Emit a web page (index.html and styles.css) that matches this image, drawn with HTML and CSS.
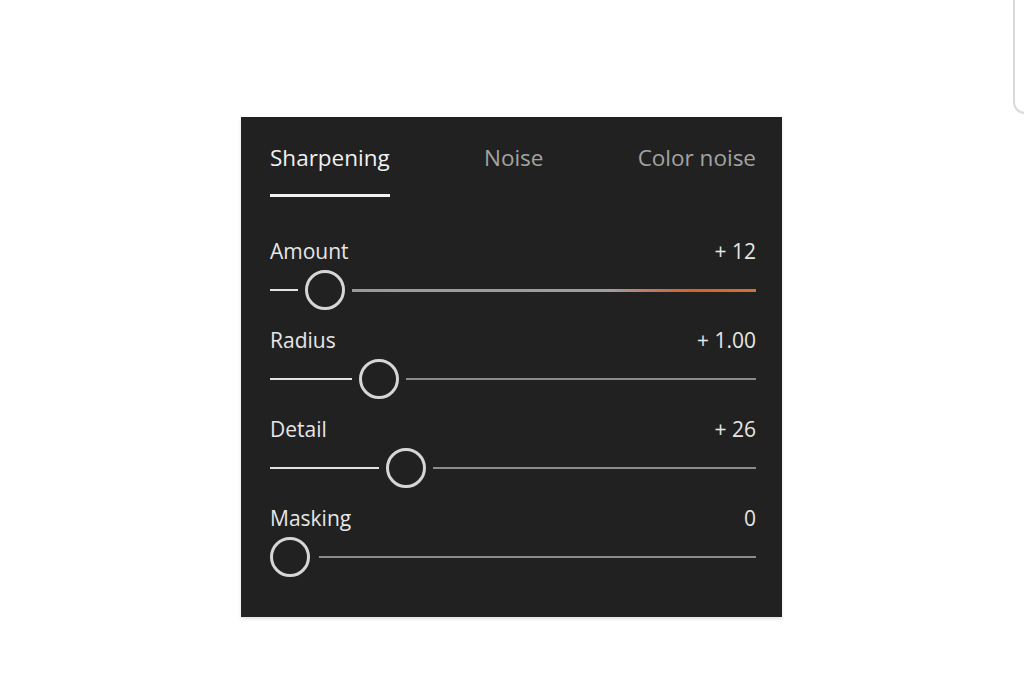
FILE: index.html
```html
<!DOCTYPE html>
<html>
<head>
<meta charset="utf-8">
<link rel="stylesheet" href="styles.css">
</head>
<body>
<div class="scroll-edge"></div>
<div class="panel">
  <div class="tabs">
    <div class="tab active">Sharpening</div>
    <div class="tab">Noise</div>
    <div class="tab">Color noise</div>
  </div>
  <div class="rows">
    <div class="row">
      <div class="row-head"><span class="label">Amount</span><span class="value">+ 12</span></div>
      <div class="slider">
        <div class="fill" style="width:28px"></div>
        <div class="thumb"></div>
        <div class="rest rest-warm"></div>
      </div>
    </div>
    <div class="row">
      <div class="row-head"><span class="label">Radius</span><span class="value">+ 1.00</span></div>
      <div class="slider">
        <div class="fill" style="width:82px"></div>
        <div class="thumb"></div>
        <div class="rest"></div>
      </div>
    </div>
    <div class="row">
      <div class="row-head"><span class="label">Detail</span><span class="value">+ 26</span></div>
      <div class="slider">
        <div class="fill" style="width:109px"></div>
        <div class="thumb"></div>
        <div class="rest"></div>
      </div>
    </div>
    <div class="row">
      <div class="row-head"><span class="label">Masking</span><span class="value">0</span></div>
      <div class="slider">
        <div class="thumb thumb-start"></div>
        <div class="rest"></div>
      </div>
    </div>
  </div>
</div>
</body>
</html>
```
FILE: styles.css
```css
html, body {
  margin: 0;
  padding: 0;
  background: #ffffff;
  width: 1024px;
  height: 687px;
  overflow: hidden;
  font-family: "Open Sans", "Liberation Sans", sans-serif;
}

.scroll-edge {
  position: absolute;
  left: 1013px;
  top: -20px;
  width: 40px;
  height: 132px;
  border-left: 2px solid #dadada;
  border-bottom: 2px solid #dadada;
  border-bottom-left-radius: 12px;
}

.panel {
  margin: 117px 0 0 241px;
  width: 541px;
  height: 500px;
  box-sizing: border-box;
  background: #212121;
  padding: 0 26px 0 29px;
  box-shadow: 0 2px 3px rgba(0, 0, 0, 0.12);
}

.tabs {
  display: flex;
  justify-content: space-between;
  padding-top: 26px;
  height: 80px;
  box-sizing: border-box;
}

.tab {
  font-size: 22.5px;
  line-height: 30px;
  color: #a3a3a3;
  height: 54px;
  box-sizing: border-box;
}

.tab.active {
  color: #f0f0f0;
  border-bottom: 3px solid #f2f2f2;
}

.rows {
  display: flex;
  flex-direction: column;
  padding-top: 40px;
  gap: 9px;
}

.row {
  display: flex;
  flex-direction: column;
  height: 80px;
}

.row-head {
  display: flex;
  justify-content: space-between;
  font-size: 21px;
  line-height: 28px;
  color: #e6e6e6;
}

.value {
  color: #e6e6e6;
}

.slider {
  display: flex;
  align-items: center;
  height: 40px;
  margin-top: 5px;
}

.fill {
  height: 2px;
  background: #e2e2e2;
  margin-right: 7px;
  flex: none;
}

.thumb {
  flex: none;
  width: 40px;
  height: 40px;
  box-sizing: border-box;
  border: 3px solid #d6d6d6;
  border-radius: 50%;
}

.thumb-start {
  margin-left: 0;
  margin-right: 2px;
}

.rest {
  flex: 1;
  height: 2px;
  margin-left: 7px;
  background: #8c8c8c;
}

.rest-warm {
  height: 3px;
  background: linear-gradient(to right, #9a9a9a 0%, #9e9e9e 64%, #b88070 72%, #d6622a 84%, #d4703a 100%);
}
```
